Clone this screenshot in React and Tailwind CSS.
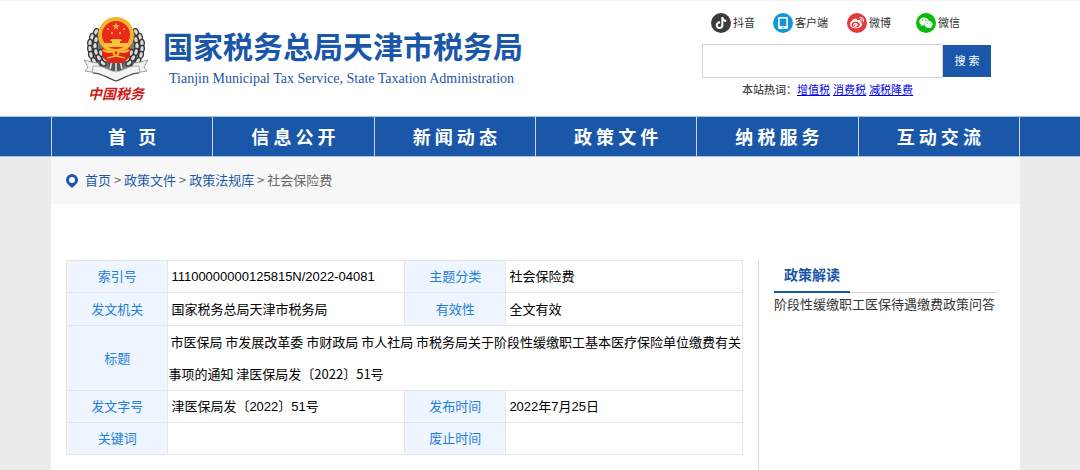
import { FaTiktok, FaWeibo, FaWeixin } from "react-icons/fa6";

const navItems = [
  "首\u00a0\u00a0\u00a0页",
  "信 息 公 开",
  "新 闻 动 态",
  "政 策 文 件",
  "纳 税 服 务",
  "互 动 交 流",
];

const hotWords = ["增值税", "消费税", "减税降费"];

const crumbs = ["首页", "政策文件", "政策法规库"];

function TabletIcon() {
  return (
    <svg viewBox="0 0 20 20" className="size-5" aria-hidden="true">
      <rect x="5" y="4" width="10" height="12" rx="1.2" fill="#fff" />
      <rect x="6.7" y="5.6" width="6.6" height="7.4" fill="#1296db" />
      <circle cx="10" cy="14.5" r="0.8" fill="#1296db" />
    </svg>
  );
}

const socials = [
  { name: "抖音", bg: "bg-[#3c3c3c]", icon: <FaTiktok className="size-3" /> },
  { name: "客户端", bg: "bg-[#1296db]", icon: <TabletIcon /> },
  { name: "微博", bg: "bg-[#e6393d]", icon: <FaWeibo className="size-[14px]" /> },
  { name: "微信", bg: "bg-[#09bb07]", icon: <FaWeixin className="size-[14px]" /> },
];

function Emblem() {
  // wheat leaves, drawn for the left side and mirrored for the right
  const leaves = [
    [13, 16, 25],
    [9, 21, 15],
    [7, 27, 5],
    [7, 33, -5],
    [8, 39, -15],
    [11, 45, -30],
    [15, 50, -45],
    [13, 24, 15],
    [12, 30, 0],
    [13, 36, -15],
    [16, 42, -30],
    [20, 47, -45],
    [18, 37, -20],
    [22, 43, -40],
  ];
  const half = leaves.map(([x, y, r]) => (
    <ellipse
      key={`${x}-${y}`}
      cx={x}
      cy={y}
      rx="2.3"
      ry="3.6"
      transform={`rotate(${r} ${x} ${y})`}
      fill="#dcdcdc"
      stroke="#333"
      strokeWidth="1.3"
    />
  ));
  return (
    <svg viewBox="0 0 66 66" className="size-[66px]" aria-hidden="true">
      <path d="M11 17C5 27 5 42 14 51l12 4h14l12-4c9-9 9-24 3-34z" fill="#777" />
      <g>{half}</g>
      <g transform="translate(66 0) scale(-1 1)">{half}</g>
      <path d="M24 44h18l-3 11H27z" fill="#555" />
      <path d="M29 45l-2 8M33 46v9M37 45l2 8" stroke="#ddd" strokeWidth="1.6" />
      <path
        d="M1 44l7 2 7 1 3 5-4 5-12-2 3-4z M65 44l-7 2-7 1-3 5 4 5 12-2-3-4z"
        fill="#f1f1f1"
        stroke="#8a8a8a"
        strokeWidth="0.8"
      />
      <path
        d="M10 50c9-1 14 4 23 6 9-2 14-7 23-6l1 7c-9 0-15 6-24 8-9-2-15-8-24-8z"
        fill="#f3f3f3"
        stroke="#999"
        strokeWidth="0.8"
      />
      <path d="M10 57c9 0 14 5 23 8 9-3 14-8 23-8" fill="none" stroke="#444" strokeWidth="1.2" />
      <path d="M19 30h28v11l-7 6H26l-7-6z" fill="#dd251c" />
      <circle cx="33" cy="19" r="16" fill="#ea2a1d" stroke="#f5b52c" strokeWidth="4" />
      <path
        d="M33 6.500l.9 2.700h2.900l-2.300 1.700.9 2.800-2.400-1.700-2.400 1.700.9-2.800-2.300-1.700h2.900z"
        fill="#f9c23c"
      />
      <g fill="#f9c23c">
        <circle cx="25" cy="13" r="1.1" />
        <circle cx="41" cy="13" r="1.1" />
        <circle cx="29" cy="17" r="1.1" />
        <circle cx="37" cy="17" r="1.1" />
        <path d="M28 23h10l1 2h-2v2h8v4H21v-4h8v-2h-2z" />
      </g>
      <path d="M20 34c4 4 9 0 13 2 4-2 9 2 13-2" fill="none" stroke="#f5b52c" strokeWidth="2.200" />
      <circle cx="33" cy="37" r="3.400" fill="#f5b52c" />
      <circle cx="33" cy="37" r="1.400" fill="#dd251c" />
      <path d="M24 42l9-2 9 2" fill="none" stroke="#f5b52c" strokeWidth="1.400" />
    </svg>
  );
}

function PinIcon() {
  return (
    <svg viewBox="0 0 12 14" className="h-[14px] w-3" aria-hidden="true">
      <path
        fillRule="evenodd"
        fill="#1a57a9"
        d="M6 0a6 6 0 0 1 6 6c0 3-3 5.500-6 8C3 11.500 0 9 0 6a6 6 0 0 1 6-6zm0 3a3 3 0 1 0 0 6 3 3 0 0 0 0-6z"
      />
    </svg>
  );
}

function Header() {
  return (
    <header className="border-t border-[#f5f5f5] bg-white pr-[9px]">
      <div className="mx-auto flex h-[115px] max-w-[969px] justify-between">
        <div className="flex pt-[15px] pl-8">
          <div className="flex w-[66px] flex-col items-center">
            <Emblem />
            <span className="text-[14px] leading-6 font-bold whitespace-nowrap text-[#d01c1c] italic">
              中国税务
            </span>
          </div>
          <div className="pt-3 pl-[14px] text-[#1a57a9]">
            <h1 className="text-[30px] leading-10 font-bold whitespace-nowrap">
              国家税务总局天津市税务局
            </h1>
            <p className="pt-px pl-[6px] font-['Liberation_Serif',serif] text-[14px] leading-5 whitespace-nowrap">
              Tianjin Municipal Tax Service, State Taxation Administration
            </p>
          </div>
        </div>

        <div className="w-[318px] pt-3">
          <ul className="grid grid-cols-[62px_74px_69px_auto] pl-[9px]">
            {socials.map((s) => (
              <li key={s.name}>
                <a href="#" className="flex items-center gap-[2px] text-[11px] leading-5 text-[#333]">
                  <span
                    className={`flex size-5 shrink-0 items-center justify-center rounded-full text-white ${s.bg}`}
                  >
                    {s.icon}
                  </span>
                  {s.name}
                </a>
              </li>
            ))}
          </ul>
          <form className="mt-[11px] flex items-end" onSubmit={(e) => e.preventDefault()}>
            <input
              type="text"
              aria-label="搜索"
              className="h-[34px] w-[241px] border border-[#d3d3d3] px-2 text-[13px] outline-none"
            />
            <button type="submit" className="mb-px h-8 w-12 bg-[#1a57a9] text-[11px] text-white">
              搜 索
            </button>
          </form>
          <p className="mt-1 pl-10 text-[11px] leading-4 font-medium text-[#444]">
            本站热词：
            {hotWords.map((word) => (
              <span key={word}>
                <a href="#" className="font-normal text-[#0000ee] underline">
                  {word}
                </a>{" "}
              </span>
            ))}
          </p>
        </div>
      </div>
    </header>
  );
}

function Nav() {
  return (
    <nav className="border-y border-[#a9c1de] bg-[#1a57a9] pr-[9px]">
      <ul className="mx-auto grid max-w-[969px] grid-cols-6 border-r border-[#c6d5e9]">
        {navItems.map((item) => (
          <li key={item} className="border-l border-[#c6d5e9]">
            <a
              href="#"
              className="block pb-px text-center font-['Noto_Sans_CJK_SC',sans-serif] text-[18px] leading-[38px] font-bold text-white"
            >
              {item}
            </a>
          </li>
        ))}
      </ul>
    </nav>
  );
}

const labelCell = "border border-[#e6e6e6] bg-[#eef5ff] text-center font-normal text-[#1e7fdc]";
const valueCell = "border border-[#e6e6e6] pl-[3px] text-black";

function Pair({ label, value }) {
  return (
    <>
      <th scope="row" className={labelCell}>
        {label}
      </th>
      <td className={valueCell}>{value}</td>
    </>
  );
}

function InfoTable() {
  return (
    <table className="w-full table-fixed border-collapse text-[13px] leading-[31px]">
      <colgroup>
        <col className="w-[15%]" />
        <col className="w-[35%]" />
        <col className="w-[15%]" />
        <col className="w-[35%]" />
      </colgroup>
      <tbody>
        <tr>
          <Pair label="索引号" value="11100000000125815N/2022-04081" />
          <Pair label="主题分类" value="社会保险费" />
        </tr>
        <tr className="h-[33px]">
          <Pair label="发文机关" value="国家税务总局天津市税务局" />
          <Pair label="有效性" value="全文有效" />
        </tr>
        <tr>
          <th scope="row" className={labelCell}>
            标题
          </th>
          <td
            colSpan={3}
            className="border border-[#e6e6e6] indent-[2px] font-['Noto_Sans_CJK_SC',sans-serif] leading-8 text-black"
          >
            市医保局 市发展改革委 市财政局 市人社局 市税务局关于阶段性缓缴职工基本医疗保险单位缴费有关事项的通知
            津医保局发〔2022〕51号
          </td>
        </tr>
        <tr>
          <Pair label="发文字号" value="津医保局发〔2022〕51号" />
          <Pair label="发布时间" value="2022年7月25日" />
        </tr>
        <tr className="h-8">
          <Pair label="关键词" value="" />
          <Pair label="废止时间" value="" />
        </tr>
      </tbody>
    </table>
  );
}

function App() {
  return (
    <div className="flex min-h-screen flex-col bg-[#ebebeb] font-['Liberation_Sans','Noto_Sans_CJK_SC',sans-serif]">
      <Header />
      <Nav />
      <div className="flex grow flex-col pr-[9px]">
        <main className="mx-auto flex w-full max-w-[969px] grow flex-col bg-white">
          <div className="flex h-[47px] items-center gap-[7px] bg-[#f7f7f7] pl-[15px]">
            <PinIcon />
            <p className="pb-[2px] font-['Noto_Sans_CJK_SC',sans-serif] text-[13px] leading-5 text-[#666]">
              {crumbs.map((c) => (
                <span key={c}>
                  <a href="#" className="text-[#1a57a9]">
                    {c}
                  </a>
                  {" > "}
                </span>
              ))}
              社会保险费
            </p>
          </div>

          <div className="flex grow gap-[15px] pt-14 pr-[23px] pl-[15px]">
            <div className="min-w-0 grow">
              <InfoTable />
            </div>
            <aside className="w-[239px] shrink-0 border-l border-[#d8d8d8] pl-[15px]">
              <div className="flex border-b border-[#d3d3d3]">
                <h2 className="-mb-px border-b-2 border-[#1a57a9] px-[10px] text-[14px] leading-[31px] font-bold text-[#1a57a9]">
                  政策解读
                </h2>
              </div>
              <a href="#" className="block text-[13px] leading-6 whitespace-nowrap text-[#333]">
                阶段性缓缴职工医保待遇缴费政策问答
              </a>
            </aside>
          </div>
        </main>
      </div>
    </div>
  );
}

export default App;
